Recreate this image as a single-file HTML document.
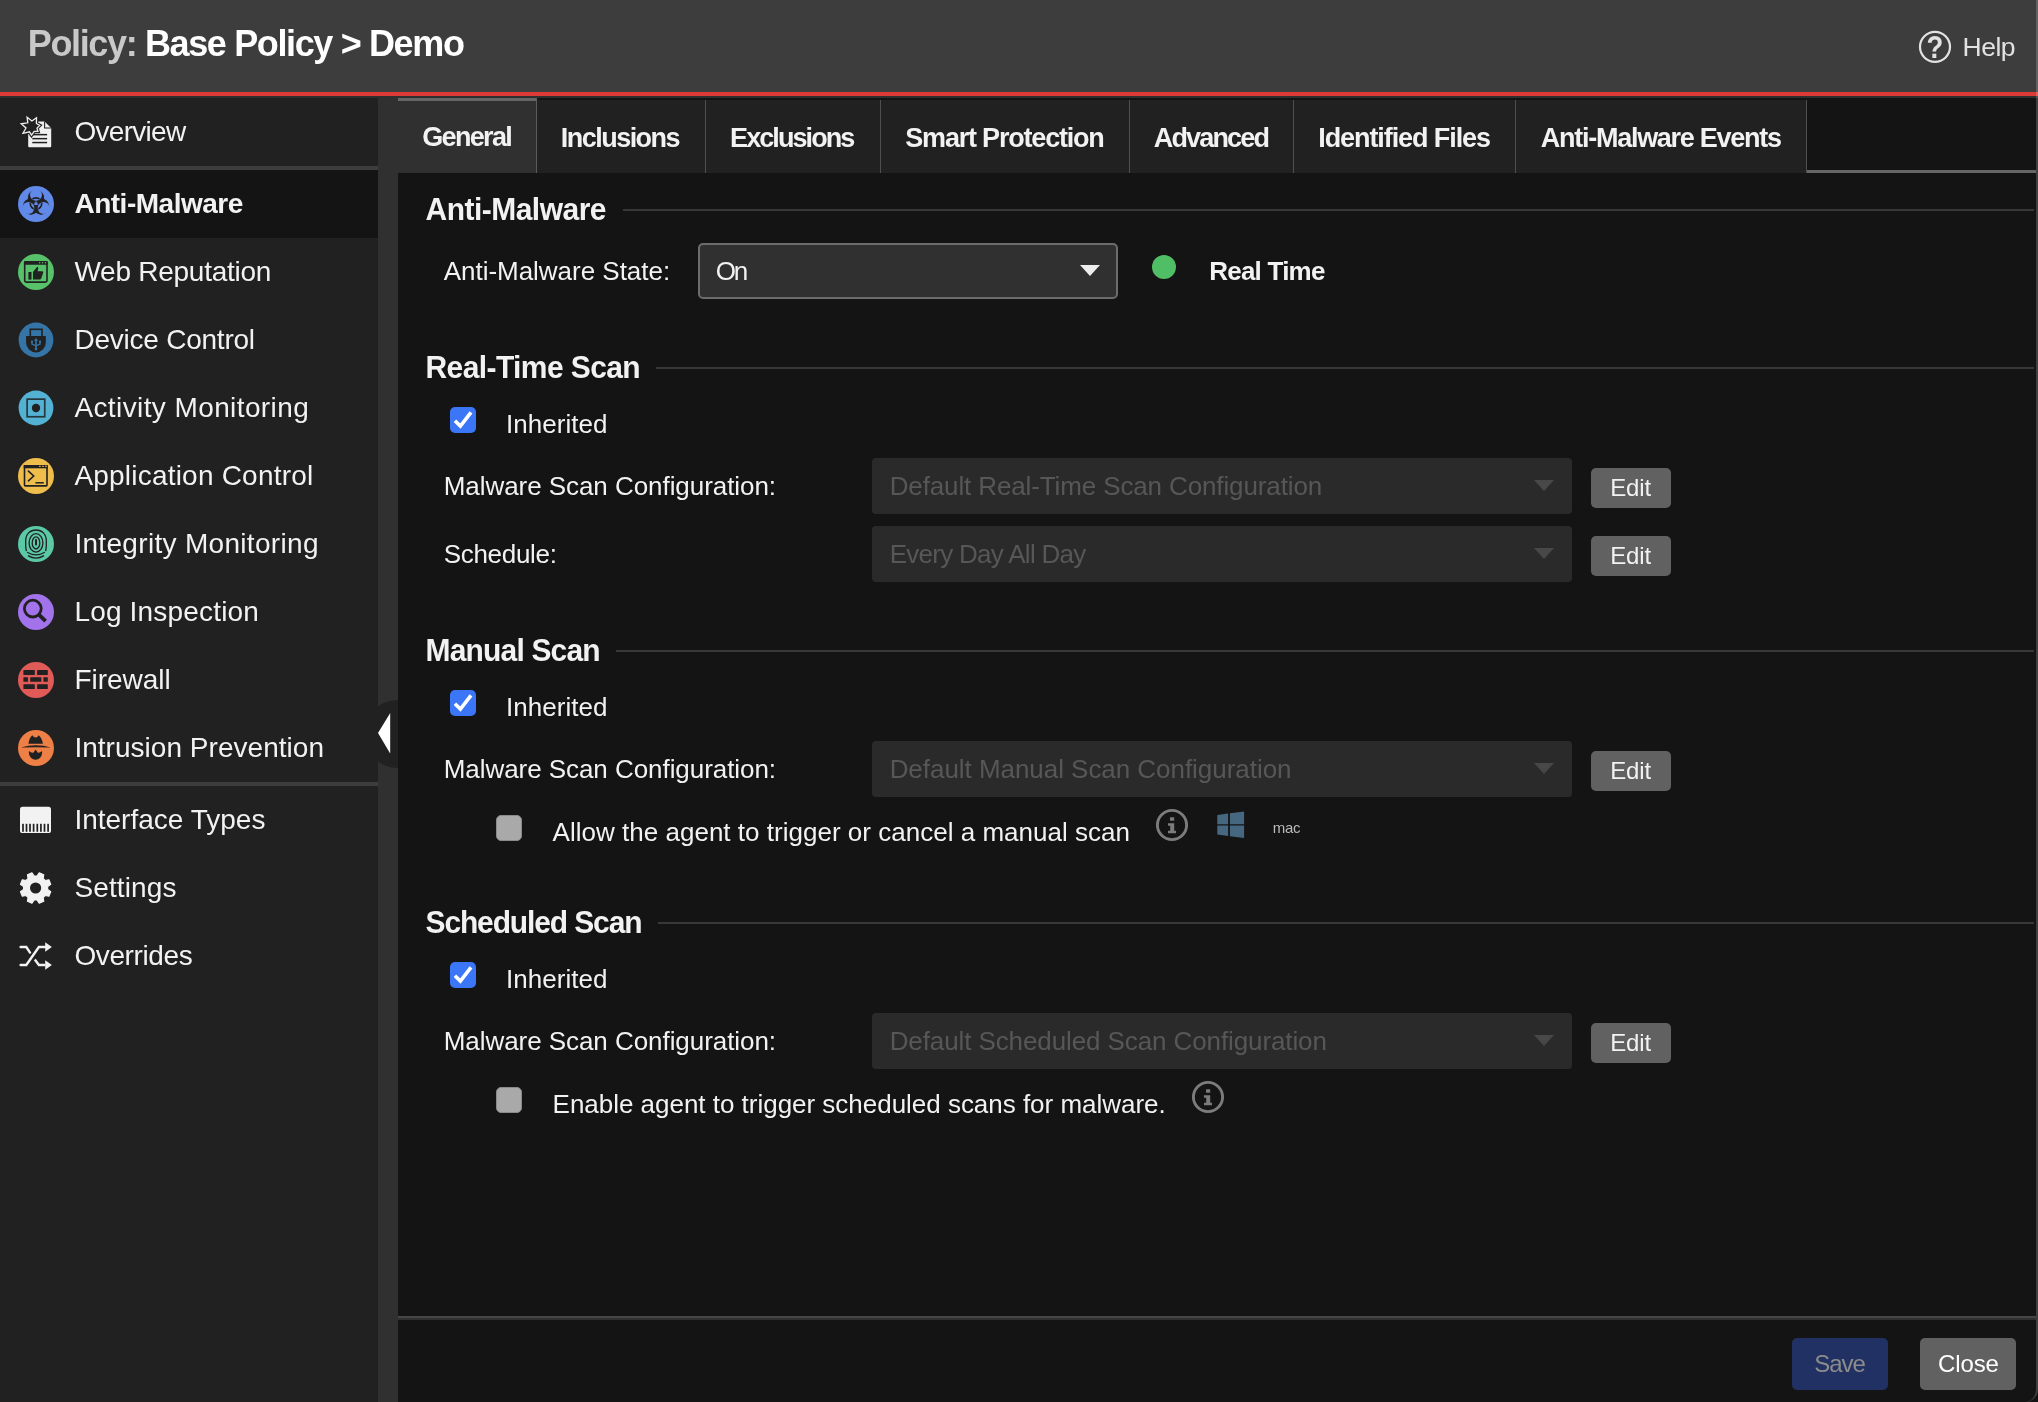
<!DOCTYPE html>
<html lang="en">
<head>
<meta charset="utf-8">
<title>Policy: Base Policy &gt; Demo</title>
<style>
*{box-sizing:border-box;margin:0;padding:0}
html,body{width:2038px;height:1402px;overflow:hidden;background:#141414}
body{position:relative;font-family:"Liberation Sans", Arial, sans-serif;color:#f2f2f2;-webkit-font-smoothing:antialiased}
ul{list-style:none}
h1,h2,strong,label,span.t,button{font-family:"Liberation Sans", Arial, sans-serif}
.t{position:absolute;white-space:nowrap;line-height:1;display:block;margin:0;padding:0;opacity:.999;transform-origin:0 84.65%}
.ic{position:absolute;display:block;overflow:visible}
#hdr{position:absolute;left:0;top:0;width:2038px;height:96px;background:#3d3d3d;border-bottom:4px solid #dc3a36}
#gap{position:absolute;left:0;top:96px;width:2038px;height:2px;background:#2e2f2f}
#side{position:absolute;left:0;top:98px;width:378px;height:1304px;background:#212121}
#split{position:absolute;left:378px;top:98px;width:20px;height:1304px;background:#303030;overflow:hidden}
#split .knob{position:absolute;left:-14px;top:602px;width:68px;height:68px;border-radius:50%;background:#212121}
#split svg{position:absolute;left:0;top:612px}
.nav-item{position:absolute;left:0;width:378px;height:68px}
.nav-item.selected{background:#141414}
.nav-sep{position:absolute;left:0;width:378px;height:4px;background:#3d3d3d}
#main{position:absolute;left:0;top:0;width:2036px;height:1402px}
#tabs{position:absolute;left:398px;top:98px;width:1638px;height:75px}
#tabs .fill{position:absolute;left:1409px;top:0;width:229px;height:75px;border-bottom:3px solid #666}
.tab{position:absolute;top:100px;height:73px;background:#212121;border-right:1px solid #4f4f4f;box-sizing:content-box}
.tab.active{top:98px;height:72px;background:#303030;border-top:3px solid #666;border-right:1px solid #5a5a5a}
.rule{position:absolute;height:2px;background:#383838}
.sel{position:absolute;width:420px;height:56px;background:#303030;border:2px solid #6c6c6c;border-radius:5px}
.arr{position:absolute;left:380px;top:20px;width:0;height:0;border-left:10px solid transparent;border-right:10px solid transparent;border-top:11px solid #ededed}
.dot{position:absolute;width:24px;height:24px;border-radius:50%;background:#4fbe64}
.cb{position:absolute;width:26px;height:26px;border-radius:5px;display:block}
.cb.on{background:#3b76f6}
.cb.off{background:#a9a9a9;border:1px solid #8a8a8a}
.cb svg{display:block}
.dsel{position:absolute;left:872px;width:700px;height:56px;background:#2a2a2a;border-radius:4px}
.darr{position:absolute;left:662px;top:22px;width:0;height:0;border-left:10px solid transparent;border-right:10px solid transparent;border-top:11px solid #484848}
.btn{position:absolute;border:0;border-radius:5px;background:#616161;color:#f2f2f2;font-size:24px;cursor:pointer}
.btn.edit{left:1591px;width:80px;height:40px}
#foot{position:absolute;left:398px;top:1316px;width:1638px;height:86px;border-top:2px solid #464646}
#foot .l2{position:absolute;left:0;top:0;width:100%;height:2px;background:#303030}
.btn.save{left:1792px;top:1338px;width:96px;height:52px;background:#213163}
.btn.close{left:1920px;top:1338px;width:96px;height:52px;background:#616161}
#edge{position:absolute;left:0;top:0;width:2038px;height:1402px;border-right:2px solid rgba(255,255,255,.19);border-bottom-right-radius:13px;pointer-events:none}
</style>
</head>
<body>
<header id="hdr">
  <h1 class="t" style="left:27.80px;top:25.53px;font-size:36px;font-weight:700;color:#fff;letter-spacing:-1.365px"><span style="color:#c9c9c9">Policy:</span> Base Policy &gt; Demo</h1>
  <a class="help" role="link">
    <svg class="ic" style="left:1917px;top:29px" width="36" height="36" viewBox="0 0 36 36" aria-hidden="true">
      <circle cx="18" cy="17.8" r="15.0" fill="none" stroke="#e2e2e2" stroke-width="2.2"/>
      <text x="0" y="0" transform="translate(17.9 28.9) scale(.86 1)" text-anchor="middle" font-family='"Liberation Sans", Arial, sans-serif' font-weight="700" font-size="32" fill="#e2e2e2" opacity=".999">?</text>
    </svg>
    <span class="t" style="left:1962.60px;top:33.57px;font-size:26.5px;font-weight:400;color:#e2e2e2;letter-spacing:-0.527px">Help</span>
  </a>
</header>
<div id="gap"></div>
<nav id="side">
  <ul>
      <li class="nav-item" style="top:0px"><svg class="ic" style="left:10.0px;top:8.0px" width="52" height="52" viewBox="0 0 52 52" aria-hidden="true"><path d="M19.2,15.6 L34.6,15.6 L41.2,22.0 L41.2,40.2 Q41.2,41.2 40.2,41.2 L19.2,41.2 Q18.2,41.2 18.2,40.2 L18.2,16.6 Q18.2,15.6 19.2,15.6 Z" fill="#f0f0f0"/><path d="M34.6,15.6 L34.6,22.0 L41.2,22.0" fill="none" stroke="#212121" stroke-width="1.1"/><rect x="22.3" y="27.9" width="14.8" height="1.5" fill="#212121"/><rect x="22.3" y="31.9" width="14.8" height="1.5" fill="#212121"/><rect x="22.3" y="35.8" width="14.8" height="1.5" fill="#212121"/><polygon points="17.1,11.3 21.9,15.0 26.5,11.7 26.4,17.5 29.7,19.4 27.0,22.1 27.9,25.4 24.2,25.4 21.5,29.1 19.5,25.8 13.0,27.3 16.0,22.0 11.2,17.8 17.8,16.8" fill="#212121" stroke="#212121" stroke-width="3.6" stroke-linejoin="miter"/><polygon points="17.1,11.3 21.9,15.0 26.5,11.7 26.4,17.5 29.7,19.4 27.0,22.1 27.9,25.4 24.2,25.4 21.5,29.1 19.5,25.8 13.0,27.3 16.0,22.0 11.2,17.8 17.8,16.8" fill="#212121" stroke="#f0f0f0" stroke-width="1.3" stroke-linejoin="miter"/></svg><span class="t" style="left:74.40px;top:19.60px;font-size:28px;font-weight:400;color:#f2f2f2;letter-spacing:-0.703px">Overview</span></li>
      <li class="nav-sep" style="top:68px"></li>
      <li class="nav-item selected" style="top:72px"><svg class="ic" style="left:18.0px;top:16.0px" width="36" height="36" viewBox="0 0 36 36" aria-hidden="true"><mask id="bh"><rect width="36" height="36" fill="#000"/><circle cx="18.00" cy="11.66" r="8.10" fill="#fff"/><circle cx="23.14" cy="20.57" r="8.10" fill="#fff"/><circle cx="12.86" cy="20.57" r="8.10" fill="#fff"/><circle cx="18.00" cy="8.74" r="6.05" fill="#000"/><circle cx="25.67" cy="22.03" r="6.05" fill="#000"/><circle cx="10.33" cy="22.03" r="6.05" fill="#000"/><circle cx="18" cy="17.6" r="1.62" fill="#000"/><line x1="18" y1="17.6" x2="18.00" y2="14.36" stroke="#000" stroke-width="0.65"/><line x1="18" y1="17.6" x2="20.81" y2="19.22" stroke="#000" stroke-width="0.65"/><line x1="18" y1="17.6" x2="15.19" y2="19.22" stroke="#000" stroke-width="0.65"/></mask><mask id="bh2"><rect width="36" height="36" fill="#000"/><circle cx="18.00" cy="8.74" r="5.51" fill="#fff"/><circle cx="25.67" cy="22.03" r="5.51" fill="#fff"/><circle cx="10.33" cy="22.03" r="5.51" fill="#fff"/></mask><circle cx="18" cy="18" r="18" fill="#6189e8"/><rect width="36" height="36" fill="#212121" mask="url(#bh)"/><circle cx="18" cy="17.6" r="5.72" fill="none" stroke="#212121" stroke-width="1.62" mask="url(#bh2)"/></svg><span class="t" style="left:74.40px;top:19.60px;font-size:28px;font-weight:700;color:#f2f2f2;letter-spacing:-0.484px">Anti-Malware</span></li>
      <li class="nav-item" style="top:140px"><svg class="ic" style="left:18.0px;top:16.0px" width="36" height="36" viewBox="0 0 36 36" aria-hidden="true"><circle cx="18" cy="18" r="18" fill="#57c26a"/><rect x="6.7" y="7.8" width="22.3" height="20.3" rx="1.6" fill="none" stroke="#212121" stroke-width="1.6"/><rect x="5.9" y="7.0" width="23.9" height="3.8" rx="1" fill="#212121"/><circle cx="21.7" cy="8.8" r="0.75" fill="#57c26a"/><circle cx="24.6" cy="8.8" r="0.75" fill="#57c26a"/><circle cx="27.5" cy="8.8" r="0.75" fill="#57c26a"/><rect x="10.4" y="18.0" width="3.1" height="7.6" fill="#212121"/><path d="M15.0,25.6 L15.0,18.0 L19.2,12.8 Q20.6,13.0 20.2,14.6 L19.6,17.2 L24.4,17.2 Q25.6,17.4 25.2,18.8 L23.2,24.6 Q22.8,25.6 21.8,25.6 Z" fill="#212121"/></svg><span class="t" style="left:74.40px;top:19.60px;font-size:28px;font-weight:400;color:#f2f2f2;letter-spacing:-0.248px">Web Reputation</span></li>
      <li class="nav-item" style="top:208px"><svg class="ic" style="left:18.0px;top:16.2px" width="36" height="36" viewBox="0 0 36 36" aria-hidden="true"><circle cx="18" cy="18" r="17.4" fill="#3474a6"/><rect x="12.3" y="7.3" width="11.7" height="9" fill="none" stroke="#212121" stroke-width="1.6"/><path d="M8.1,14.1 L27.8,14.1 L27.8,20.8 A 9.85 9.6 0 0 1 8.1,20.8 Z" fill="#212121"/><path d="M18.0,16.0 L20.2,18.8 L18.8,18.8 L18.8,27.4 L17.2,27.4 L17.2,18.8 L15.8,18.8 Z" fill="#3474a6"/><path d="M14.0,19.8 L14.0,22.1 L18.0,23.8 M22.0,19.8 L22.0,22.1 L18.0,23.8" fill="none" stroke="#3474a6" stroke-width="1.4"/><circle cx="18.0" cy="27.1" r="1.4" fill="#3474a6"/><rect x="13.0" y="18.6" width="2" height="2" fill="#3474a6"/><rect x="21.0" y="18.6" width="2" height="2" fill="#3474a6"/></svg><span class="t" style="left:74.40px;top:19.60px;font-size:28px;font-weight:400;color:#f2f2f2;letter-spacing:-0.225px">Device Control</span></li>
      <li class="nav-item" style="top:276px"><svg class="ic" style="left:18.0px;top:16.0px" width="36" height="36" viewBox="0 0 36 36" aria-hidden="true"><circle cx="18" cy="18" r="17.4" fill="#53b2d4"/><rect x="9.15" y="9.15" width="17.60" height="17.60" fill="none" stroke="#25363d" stroke-width="1.7"/><circle cx="18" cy="18" r="4.2" fill="#212121"/></svg><span class="t" style="left:74.40px;top:19.60px;font-size:28px;font-weight:400;color:#f2f2f2;letter-spacing:0.399px">Activity Monitoring</span></li>
      <li class="nav-item" style="top:344px"><svg class="ic" style="left:18.0px;top:16.0px" width="36" height="36" viewBox="0 0 36 36" aria-hidden="true"><circle cx="18" cy="18" r="18" fill="#eebd4c"/><rect x="6.5" y="7.8" width="22.5" height="20.1" rx="0.8" fill="none" stroke="#212121" stroke-width="1.6"/><rect x="5.7" y="7.0" width="24.1" height="3.3" fill="#212121"/><rect x="21.1" y="7.7" width="1.6" height="1.2" fill="#eebd4c"/><rect x="24.2" y="7.7" width="1.6" height="1.2" fill="#eebd4c"/><rect x="27.2" y="7.7" width="1.6" height="1.2" fill="#eebd4c"/><path d="M10.4,13.1 L15.7,18.0 L10.4,22.8" fill="none" stroke="#212121" stroke-width="1.6" stroke-linecap="round" stroke-linejoin="miter"/><path d="M17.4,24.8 L25.8,24.8" stroke="#212121" stroke-width="1.5"/></svg><span class="t" style="left:74.40px;top:19.60px;font-size:28px;font-weight:400;color:#f2f2f2;letter-spacing:0.210px">Application Control</span></li>
      <li class="nav-item" style="top:412px"><svg class="ic" style="left:18.0px;top:16.0px" width="36" height="36" viewBox="0 0 36 36" aria-hidden="true"><circle cx="18" cy="18" r="18" fill="#5bc8a6"/><rect x="17.0" y="13.1" width="2" height="6.3" rx="1" fill="#212121"/><ellipse cx="18" cy="16.9" rx="3.8" ry="6.1" fill="none" stroke="#212121" stroke-width="1.3"/><ellipse cx="18" cy="16.9" rx="6.9" ry="9.3" fill="none" stroke="#212121" stroke-width="1.3"/><path d="M8.4,25.2 C7.3,21.0 7.6,18.0 7.7,15.0 C7.7,8.0 12.0,4.0 18.0,4.0 C24.0,4.0 28.3,8.0 28.3,15.0 C28.4,18.0 28.7,21.0 27.6,25.2" fill="none" stroke="#212121" stroke-width="1.3"/><path d="M9.2,26.2 Q18.0,31.5 26.8,26.2" fill="none" stroke="#212121" stroke-width="1.3"/><path d="M10.0,29.6 Q18.0,34.5 26.0,29.6" fill="none" stroke="#212121" stroke-width="1.3"/></svg><span class="t" style="left:74.40px;top:19.60px;font-size:28px;font-weight:400;color:#f2f2f2;letter-spacing:0.315px">Integrity Monitoring</span></li>
      <li class="nav-item" style="top:480px"><svg class="ic" style="left:18.0px;top:16.0px" width="36" height="36" viewBox="0 0 36 36" aria-hidden="true"><circle cx="18" cy="18" r="18" fill="#a373ec"/><circle cx="14.8" cy="14.6" r="8.4" fill="none" stroke="#212121" stroke-width="2.8"/><line x1="20.9" y1="20.6" x2="27.6" y2="27.2" stroke="#212121" stroke-width="3.8"/></svg><span class="t" style="left:74.40px;top:19.60px;font-size:28px;font-weight:400;color:#f2f2f2;letter-spacing:0.183px">Log Inspection</span></li>
      <li class="nav-item" style="top:548px"><svg class="ic" style="left:18.0px;top:16.0px" width="36" height="36" viewBox="0 0 36 36" aria-hidden="true"><circle cx="18" cy="18" r="18" fill="#e05a57"/><rect x="5.4" y="8.1" width="11.4" height="4.9" rx="0.5" fill="#212121"/><rect x="19.1" y="8.1" width="10.7" height="4.9" rx="0.5" fill="#212121"/><rect x="5.4" y="22.2" width="11.4" height="4.8" rx="0.5" fill="#212121"/><rect x="19.1" y="22.2" width="10.7" height="4.8" rx="0.5" fill="#212121"/><rect x="5.4" y="15.2" width="4.6" height="4.6" rx="0.5" fill="#212121"/><rect x="12.2" y="15.2" width="11.1" height="4.6" rx="0.5" fill="#212121"/><rect x="25.4" y="15.2" width="4.4" height="4.6" rx="0.5" fill="#212121"/></svg><span class="t" style="left:74.40px;top:19.60px;font-size:28px;font-weight:400;color:#f2f2f2;letter-spacing:-0.017px">Firewall</span></li>
      <li class="nav-item" style="top:616px"><svg class="ic" style="left:18.0px;top:16.0px" width="36" height="36" viewBox="0 0 36 36" aria-hidden="true"><circle cx="18" cy="18" r="18" fill="#ee7f45"/><path d="M10.4,13.7 Q11.4,7.5 14.3,5.2 Q15.8,7.6 17.7,7.6 Q19.6,7.6 20.7,5.2 Q23.8,7.5 24.9,13.7 Z" fill="#212121"/><path d="M2.8,17.6 Q17.9,12.9 33.0,17.6 Q17.9,16.9 2.8,17.6 Z" fill="#212121"/><path d="M10.9,21.0 Q13.5,23.4 15.6,22.6 L17.6,19.5 L19.6,22.6 Q21.7,23.4 24.1,21.0 C24.6,26.2 21.6,29.4 17.6,29.8 C13.6,29.4 10.4,26.2 10.9,21.0 Z" fill="#212121"/></svg><span class="t" style="left:74.40px;top:19.60px;font-size:28px;font-weight:400;color:#f2f2f2;letter-spacing:0.031px">Intrusion Prevention</span></li>
      <li class="nav-sep" style="top:684px"></li>
      <li class="nav-item" style="top:688px"><svg class="ic" style="left:18.0px;top:16.0px" width="36" height="36" viewBox="0 0 36 36" aria-hidden="true"><rect x="2" y="4.8" width="31" height="26.2" rx="2.6" fill="#f2f2f2"/><rect x="4.15" y="21.8" width="1.7" height="8.0" fill="#212121"/><rect x="7.65" y="21.8" width="1.7" height="8.0" fill="#212121"/><rect x="11.15" y="21.8" width="1.7" height="8.0" fill="#212121"/><rect x="14.75" y="21.8" width="1.7" height="8.0" fill="#212121"/><rect x="18.45" y="21.8" width="1.7" height="8.0" fill="#212121"/><rect x="22.05" y="21.8" width="1.7" height="8.0" fill="#212121"/><rect x="25.65" y="21.8" width="1.7" height="8.0" fill="#212121"/><rect x="29.25" y="21.8" width="1.7" height="8.0" fill="#212121"/></svg><span class="t" style="left:74.40px;top:19.60px;font-size:28px;font-weight:400;color:#f2f2f2;letter-spacing:0.006px">Interface Types</span></li>
      <li class="nav-item" style="top:756px"><svg class="ic" style="left:18.0px;top:16.0px" width="36" height="36" viewBox="0 0 36 36" aria-hidden="true"><polygon points="18.97,5.98 21.24,2.83 25.75,4.70 25.13,8.53 27.07,10.47 30.90,9.85 32.77,14.36 29.62,16.63 29.62,19.37 32.77,21.64 30.90,26.15 27.07,25.53 25.13,27.47 25.75,31.30 21.24,33.17 18.97,30.02 16.23,30.02 13.96,33.17 9.45,31.30 10.07,27.47 8.13,25.53 4.30,26.15 2.43,21.64 5.58,19.37 5.58,16.63 2.43,14.36 4.30,9.85 8.13,10.47 10.07,8.53 9.45,4.70 13.96,2.83 16.23,5.98" fill="#f2f2f2" stroke="#f2f2f2" stroke-width="1.2" stroke-linejoin="round"/><circle cx="17.6" cy="18.0" r="5.6" fill="#212121"/></svg><span class="t" style="left:74.40px;top:19.60px;font-size:28px;font-weight:400;color:#f2f2f2;letter-spacing:0.140px">Settings</span></li>
      <li class="nav-item" style="top:824px"><svg class="ic" style="left:18.0px;top:16.0px" width="36" height="36" viewBox="0 0 36 36" aria-hidden="true"><path d="M2.6,27.0 L8.3,27.0 L20.9,9.0 L27.4,9.0" fill="none" stroke="#f2f2f2" stroke-width="2.4" stroke-linecap="round" stroke-linejoin="miter"/><path d="M2.6,9.0 L8.3,9.0 L12.0,14.6" fill="none" stroke="#f2f2f2" stroke-width="2.4" stroke-linecap="round" stroke-linejoin="miter"/><path d="M16.8,21.5 L20.9,27.0 L27.4,27.0" fill="none" stroke="#f2f2f2" stroke-width="2.4" stroke-linejoin="miter"/><polygon points="27.2,4.2 33.9,9.0 27.2,13.8" fill="#f2f2f2"/><polygon points="27.2,22.2 33.9,27.0 27.2,31.8" fill="#f2f2f2"/></svg><span class="t" style="left:74.40px;top:19.60px;font-size:28px;font-weight:400;color:#f2f2f2;letter-spacing:-0.390px">Overrides</span></li>
  </ul>
</nav>
<div id="split"><span class="knob"></span><svg width="20" height="50" viewBox="0 0 20 50"><polygon points="0,23 12.2,3 12.2,43.5" fill="#fff"/></svg></div>
<main id="main">
  <ul id="tabs-list" role="tablist">
        <li class="tab active" style="left:398px;width:138px"><span class="t" style="left:24.30px;top:22.74px;font-size:27px;font-weight:700;color:#f2f2f2;letter-spacing:-1.687px">General</span></li>
        <li class="tab" style="left:537px;width:168px"><span class="t" style="left:23.70px;top:24.94px;font-size:27px;font-weight:700;color:#f2f2f2;letter-spacing:-1.513px">Inclusions</span></li>
        <li class="tab" style="left:706px;width:174px"><span class="t" style="left:24.10px;top:24.94px;font-size:27px;font-weight:700;color:#f2f2f2;letter-spacing:-1.924px">Exclusions</span></li>
        <li class="tab" style="left:881px;width:248px"><span class="t" style="left:24.30px;top:24.94px;font-size:27px;font-weight:700;color:#f2f2f2;letter-spacing:-1.201px">Smart Protection</span></li>
        <li class="tab" style="left:1130px;width:163px"><span class="t" style="left:23.80px;top:24.94px;font-size:27px;font-weight:700;color:#f2f2f2;letter-spacing:-1.846px">Advanced</span></li>
        <li class="tab" style="left:1294px;width:221px"><span class="t" style="left:24.30px;top:24.94px;font-size:27px;font-weight:700;color:#f2f2f2;letter-spacing:-1.088px">Identified Files</span></li>
        <li class="tab" style="left:1516px;width:290px"><span class="t" style="left:24.80px;top:24.94px;font-size:27px;font-weight:700;color:#f2f2f2;letter-spacing:-1.268px">Anti-Malware Events</span></li>
  </ul>
  <div id="tabs"><div class="fill"></div></div>
  <div id="panel" role="tabpanel">
      <section>
      <h2 class="t" style="left:425.50px;top:195.10px;font-size:30px;font-weight:700;color:#f2f2f2;letter-spacing:-0.520px;transform:scaleY(1.04)">Anti-Malware</h2><div class="rule" style="left:623px;top:209px;width:1411px"></div>
      <label class="t" style="left:443.70px;top:257.79px;font-size:26px;font-weight:400;color:#f2f2f2;letter-spacing:-0.023px">Anti-Malware State:</label>
      <div class="sel" style="left:698px;top:243px"><span class="t" style="left:15.80px;top:12.89px;font-size:26px;font-weight:400;color:#f2f2f2;letter-spacing:-2.200px">On</span><span class="arr"></span></div>
      <span class="dot" style="left:1152px;top:255px"></span>
      <strong class="t" style="left:1209.20px;top:257.99px;font-size:26px;font-weight:700;color:#f2f2f2;letter-spacing:-0.765px">Real Time</strong>
      </section>
      <section>
      <h2 class="t" style="left:425.50px;top:352.91px;font-size:30px;font-weight:700;color:#f2f2f2;letter-spacing:-0.594px;transform:scaleY(1.04)">Real-Time Scan</h2><div class="rule" style="left:656px;top:367px;width:1378px"></div>
      <span class="cb on" style="left:450px;top:407px" role="checkbox" aria-checked="true"><svg width="26" height="26" viewBox="0 0 26 26"><path d="M4.9,13.7 L10.4,19.1 L21.0,5.3" fill="none" stroke="#fff" stroke-width="3.6"/></svg></span>
      <label class="t" style="left:506.00px;top:410.99px;font-size:26px;font-weight:400;color:#f2f2f2;letter-spacing:0.035px">Inherited</label>
      <label class="t" style="left:443.70px;top:472.99px;font-size:26px;font-weight:400;color:#f2f2f2;letter-spacing:-0.055px">Malware Scan Configuration:</label>
      <div class="dsel" style="top:458px" role="combobox" aria-disabled="true"><span class="t" style="left:17.65px;top:14.99px;font-size:26px;font-weight:400;color:#575757;letter-spacing:-0.125px">Default Real-Time Scan Configuration</span><span class="darr"></span></div>
      <button class="btn edit" style="top:468px" type="button"><span class="t" style="left:19.30px;top:7.68px;font-size:24px;font-weight:400;color:#f2f2f2;letter-spacing:-0.190px">Edit</span></button>
      <label class="t" style="left:443.70px;top:540.99px;font-size:26px;font-weight:400;color:#f2f2f2;letter-spacing:-0.303px">Schedule:</label>
      <div class="dsel" style="top:526px" role="combobox" aria-disabled="true"><span class="t" style="left:17.65px;top:14.99px;font-size:26px;font-weight:400;color:#575757;letter-spacing:-0.711px">Every Day All Day</span><span class="darr"></span></div>
      <button class="btn edit" style="top:536px" type="button"><span class="t" style="left:19.30px;top:7.68px;font-size:24px;font-weight:400;color:#f2f2f2;letter-spacing:-0.190px">Edit</span></button>
      </section>
      <section>
      <h2 class="t" style="left:425.50px;top:635.90px;font-size:30px;font-weight:700;color:#f2f2f2;letter-spacing:-0.822px;transform:scaleY(1.04)">Manual Scan</h2><div class="rule" style="left:616px;top:650px;width:1418px"></div>
      <span class="cb on" style="left:450px;top:690px" role="checkbox" aria-checked="true"><svg width="26" height="26" viewBox="0 0 26 26"><path d="M4.9,13.7 L10.4,19.1 L21.0,5.3" fill="none" stroke="#fff" stroke-width="3.6"/></svg></span>
      <label class="t" style="left:506.00px;top:694.19px;font-size:26px;font-weight:400;color:#f2f2f2;letter-spacing:0.035px">Inherited</label>
      <label class="t" style="left:443.70px;top:756.29px;font-size:26px;font-weight:400;color:#f2f2f2;letter-spacing:-0.055px">Malware Scan Configuration:</label>
      <div class="dsel" style="top:741px" role="combobox" aria-disabled="true"><span class="t" style="left:17.65px;top:14.99px;font-size:26px;font-weight:400;color:#575757;letter-spacing:-0.043px">Default Manual Scan Configuration</span><span class="darr"></span></div>
      <button class="btn edit" style="top:751px" type="button"><span class="t" style="left:19.30px;top:7.68px;font-size:24px;font-weight:400;color:#f2f2f2;letter-spacing:-0.190px">Edit</span></button>
      <span class="cb off" style="left:496px;top:815px" role="checkbox" aria-checked="false"></span>
      <label class="t" style="left:552.60px;top:819.19px;font-size:26px;font-weight:400;color:#f2f2f2;letter-spacing:0.014px">Allow the agent to trigger or cancel a manual scan</label>
      <svg class="ic" style="left:1155px;top:808px" width="34" height="34" viewBox="0 0 34 34" role="img" aria-label="info"><circle cx="17" cy="17" r="14.6" fill="none" stroke="#7c7c7c" stroke-width="2.9"/><rect x="15" y="9.3" width="4.2" height="3.4" fill="#7c7c7c"/><path d="M13,15.2 H19.2 V22.8 H21 V25.2 H13 V22.8 H15.2 V17.8 H13 Z" fill="#7c7c7c"/></svg>
      <svg class="ic" style="left:1216px;top:810px" width="30" height="30" viewBox="0 0 30 30" role="img" aria-label="Windows"><polygon points="1.3,5.0 12.1,3.5 12.1,14.3 1.3,14.3" fill="#456880"/><polygon points="13.9,3.3 28.1,1.4 28.1,14.3 13.9,14.3" fill="#456880"/><polygon points="1.3,15.6 12.1,15.6 12.1,26.0 1.3,24.6" fill="#456880"/><polygon points="13.9,15.6 28.1,15.6 28.1,28.0 13.9,26.2" fill="#456880"/></svg>
      <span class="t" style="left:1272.70px;top:819.70px;font-size:15px;font-weight:400;color:#b9b9b9;letter-spacing:-0.290px">mac</span>
      </section>
      <section>
      <h2 class="t" style="left:425.50px;top:907.90px;font-size:30px;font-weight:700;color:#f2f2f2;letter-spacing:-1.132px;transform:scaleY(1.04)">Scheduled Scan</h2><div class="rule" style="left:658px;top:922px;width:1376px"></div>
      <span class="cb on" style="left:450px;top:962px" role="checkbox" aria-checked="true"><svg width="26" height="26" viewBox="0 0 26 26"><path d="M4.9,13.7 L10.4,19.1 L21.0,5.3" fill="none" stroke="#fff" stroke-width="3.6"/></svg></span>
      <label class="t" style="left:506.00px;top:966.19px;font-size:26px;font-weight:400;color:#f2f2f2;letter-spacing:0.035px">Inherited</label>
      <label class="t" style="left:443.70px;top:1028.29px;font-size:26px;font-weight:400;color:#f2f2f2;letter-spacing:-0.055px">Malware Scan Configuration:</label>
      <div class="dsel" style="top:1013px" role="combobox" aria-disabled="true"><span class="t" style="left:17.65px;top:14.99px;font-size:26px;font-weight:400;color:#575757;letter-spacing:-0.102px">Default Scheduled Scan Configuration</span><span class="darr"></span></div>
      <button class="btn edit" style="top:1023px" type="button"><span class="t" style="left:19.30px;top:7.68px;font-size:24px;font-weight:400;color:#f2f2f2;letter-spacing:-0.190px">Edit</span></button>
      <span class="cb off" style="left:496px;top:1087px" role="checkbox" aria-checked="false"></span>
      <label class="t" style="left:552.60px;top:1091.09px;font-size:26px;font-weight:400;color:#f2f2f2;letter-spacing:-0.022px">Enable agent to trigger scheduled scans for malware.</label>
      <svg class="ic" style="left:1191px;top:1080px" width="34" height="34" viewBox="0 0 34 34" role="img" aria-label="info"><circle cx="17" cy="17" r="14.6" fill="none" stroke="#7c7c7c" stroke-width="2.9"/><rect x="15" y="9.3" width="4.2" height="3.4" fill="#7c7c7c"/><path d="M13,15.2 H19.2 V22.8 H21 V25.2 H13 V22.8 H15.2 V17.8 H13 Z" fill="#7c7c7c"/></svg>
      </section>
  </div>
  <footer id="foot"><div class="l2"></div></footer>
  <button class="btn save" type="button" disabled><span class="t" style="left:22.20px;top:14.28px;font-size:24px;font-weight:400;color:#8c8c8c;letter-spacing:-1.027px">Save</span></button>
  <button class="btn close" type="button"><span class="t" style="left:18.00px;top:14.28px;font-size:24px;font-weight:400;color:#ffffff;letter-spacing:-0.120px">Close</span></button>
</main>
<div id="edge"></div>
</body>
</html>
